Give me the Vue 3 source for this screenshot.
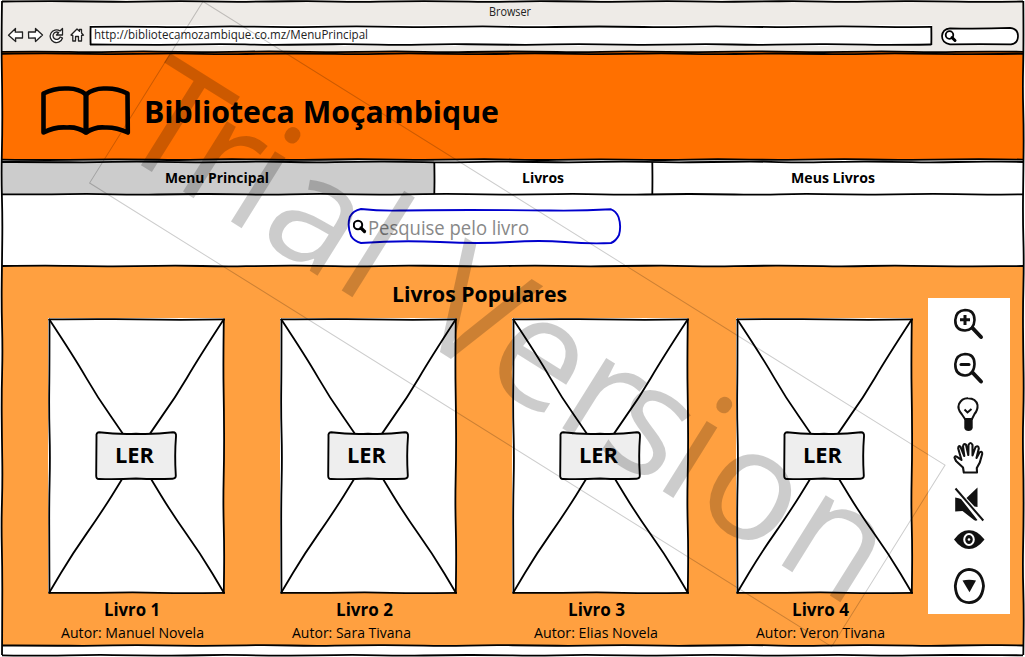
<script setup>
import { h } from 'vue'

// Fixed-width line of text
const Label = (p) =>
  h('svg', { class: 'label', width: p.w, height: Math.round(p.size * 1.4) }, [
    h(
      'text',
      {
        x: 0,
        y: Math.round(p.size * 1.1),
        textLength: p.w,
        lengthAdjust: 'spacingAndGlyphs',
        'font-size': p.size,
        'font-weight': p.weight || 400,
        fill: p.color || '#000',
      },
      p.text
    ),
  ])
Label.props = ['text', 'w', 'size', 'weight', 'color']

// Hand-drawn line: gentle wobble around the straight path
function line(x1, y1, x2, y2, seed = 1, amp = 0.7) {
  const len = Math.hypot(x2 - x1, y2 - y1)
  const n = Math.max(2, Math.round(len / 45))
  const nx = -(y2 - y1) / len
  const ny = (x2 - x1) / len
  const pts = []
  for (let i = 0; i <= n; i++) {
    const t = i / n
    const o = i === 0 || i === n ? 0 : Math.sin(i * 2.3 + seed * 1.7) * amp
    pts.push([x1 + (x2 - x1) * t + nx * o, y1 + (y2 - y1) * t + ny * o])
  }
  let d = `M${pts[0]}`
  for (let i = 1; i < n; i++) {
    const mx = (pts[i][0] + pts[i + 1][0]) / 2
    const my = (pts[i][1] + pts[i + 1][1]) / 2
    d += `Q${pts[i]} ${mx},${my}`
  }
  return d + `L${pts[n]}`
}

const frame = [
  line(2, 1.5, 1023, 1.5, 1),
  line(2, 1, 2, 655, 3),
  line(1023.3, 1, 1023.3, 655, 2),
  line(2, 51.8, 1023, 51.8, 2),
  line(2, 53.8, 1023, 53.8, 5),
  line(2, 159.6, 1023, 159.6, 3),
  line(2, 162, 1023, 162, 6),
  line(2, 194.3, 1023, 194.3, 4),
  line(2, 266, 1023, 266, 5),
  line(2, 645.5, 1023, 645.5, 6),
  line(2, 655.3, 1023, 655.3, 7),
  line(434.3, 162, 434.3, 194, 1, 0.4),
  line(652.3, 162, 652.3, 194, 2, 0.4),
]

const cover = [
  line(0.6, 1.4, 177, 1.4, 1),
  line(175.8, 1, 175.8, 275.5, 3),
  line(0.6, 274.8, 177, 274.8, 4),
  line(1.5, 1, 1.5, 275.5, 6),
  line(1, 1, 176, 275, 2, 1.4),
  line(176, 1, 1, 275, 4, 1.4),
]

const books = [
  { title: 'Livro 1', tw: 56, author: 'Autor: Manuel Novela', aw: 143 },
  { title: 'Livro 2', tw: 57, author: 'Autor: Sara Tivana', aw: 119, start: true },
  { title: 'Livro 3', tw: 57, author: 'Autor: Elias Novela', aw: 124 },
  { title: 'Livro 4', tw: 57, author: 'Autor: Veron Tivana', aw: 129 },
]
</script>

<template>
  <div class="window">
    <header class="chrome">
      <div class="chrome-title"><Label text="Browser" :w="42" :size="12" color="#222" /></div>
      <div class="toolbar">
        <svg class="nav" width="90" height="22" viewBox="0 24 90 22">
          <g fill="#fff" stroke="#222" stroke-width="1.3" stroke-linejoin="round">
            <path d="M8.5 35.200 L15.500 28.500 L15.300 32.200 L22.500 32 L22.500 38 L15.500 38 L15.700 41.500 Z" />
            <path d="M42.500 35 L35.500 28.500 L35.500 32 L28.500 32 L28.700 38.200 L35.300 38 L35.500 41.500 Z" />
            <path d="M60 31 L62.500 28.500 L62.500 35 L56.500 35 L58.700 32.600 A3.700 3.700 0 1 0 60.200 37 L62.500 38 A6.300 6.300 0 1 1 60 31 Z" />
            <path d="M71 35 L77 29 L79.500 31.300 L79.500 29.500 L81.500 29.500 L81.500 33 L83.500 35.200 L81.500 35.500 L81.500 41 L78.500 41 L78.500 36.500 L75.500 36.500 L75.500 41 L72.800 41 L72.800 35.500 Z" />
          </g>
        </svg>
        <div class="url">
          <Label text="http://bibliotecamozambique.co.mz/MenuPrincipal" :w="274" :size="12" color="#222" />
          <svg class="ink" width="843" height="21">
            <path :d="line(0, 1.800, 841.500, 1.800, 2)" />
            <path :d="line(841.300, 1, 841.300, 20, 1, 0.2)" />
            <path :d="line(841.500, 19.500, 0, 19.500, 5)" />
            <path :d="line(0.600, 20, 0.600, 1, 1, 0.2)" />
          </svg>
        </div>
        <svg class="quick" width="78" height="20" viewBox="941 26 78 20">
          <path d="M950 28.300 Q980 29 1010 27.800 Q1018 28.500 1018 36 Q1018 43.500 1011 44.300 Q980 43.800 950 44.300 Q942 43 942 36 Q942.500 29 950 28.300Z" fill="#fff" stroke="#000" stroke-width="1.700" />
          <circle cx="949.500" cy="35" r="3.800" fill="none" stroke="#000" stroke-width="1.800" />
          <path d="M952 37.500 L955 40.500" stroke="#000" stroke-width="3" stroke-linecap="round" />
        </svg>
      </div>
    </header>

    <section class="banner">
      <svg width="92" height="52" viewBox="40 85 92 52">
        <g fill="none" stroke="#000" stroke-width="4.600" stroke-linejoin="round" stroke-linecap="round">
          <path d="M86 94.500 Q78 88 67 88.500 Q54 88 43.500 93.500 L43.500 132.500 Q55 126.500 67 127.500 Q77 126.500 86 132.500 Q95 126.500 105 127.500 Q116 127 127.800 132.500 L127.500 93.500 Q117 88 105 88.500 Q94 88 86 94.500 Z" />
          <path d="M86 94.500 V132" stroke-width="5.200" />
        </g>
      </svg>
      <Label text="Biblioteca Moçambique" :w="355" :size="31" weight="700" />
    </section>

    <nav class="tabs">
      <div class="tab active"><Label text="Menu Principal" :w="104" :size="15" weight="700" /></div>
      <div class="tab"><Label text="Livros" :w="42" :size="15" weight="700" /></div>
      <div class="tab"><Label text="Meus Livros" :w="84" :size="15" weight="700" /></div>
    </nav>

    <section class="search">
      <div class="search-box">
        <svg width="15" height="15" viewBox="353 219 15 15">
          <circle cx="358" cy="225" r="4.200" fill="none" stroke="#000" stroke-width="2" />
          <path d="M361 228 L364.500 231.500" stroke="#000" stroke-width="3.200" stroke-linecap="round" />
        </svg>
        <Label text="Pesquise pelo livro" :w="161" :size="20" color="#888" />
        <svg class="outline" width="274" height="36" viewBox="347 208 274 36">
          <path d="M361 209 Q380 211 400 210.500 T470 210 T550 210.500 T611 209.300 Q616 211 618.500 217 Q621.500 226 619 235 Q616 241 611 243 Q590 244 565 242 T510 242 T440 242 T361 243 Q354 241 351 236 Q347 226 349.800 217 Q353 210.500 361 209 Z" />
        </svg>
      </div>
    </section>

    <main class="content">
      <div class="shelf">
        <h2><Label text="Livros Populares" :w="175" :size="22" weight="700" /></h2>
        <div class="books">
          <article v-for="b in books" :key="b.title" class="book">
            <div class="cover">
              <svg class="cross" width="177" height="276">
                <path v-for="(d, k) in cover" :key="k" :d="d" />
              </svg>
              <div class="read">
                <svg class="read-shape" width="82" height="50">
                  <path d="M4 1.300 Q22 3.500 41 2.800 Q60 3.500 78 1.300 Q81.500 1.300 81 5.500 Q79.500 24 80.800 44.500 Q81 47.500 77.500 47.700 Q60 48.500 41 47.500 Q22 48.500 4 48 Q1 48 1.200 44.500 L1.500 5.500 Q1 1.500 4 1.300 Z" />
                </svg>
                <Label text="LER" :w="39" :size="22" weight="700" />
              </div>
            </div>
            <div class="meta">
              <Label :text="b.title" :w="b.tw" :size="17" weight="700" />
              <Label :class="['author', { start: b.start }]" :text="b.author" :w="b.aw" :size="14.500" />
            </div>
          </article>
        </div>
      </div>

      <aside class="tools">
        <svg width="82" height="47" viewBox="928 298 82 47">
          <path d="M965 310 Q974.500 310 974.500 320 Q974 330 965 330.500 Q955 330 955.300 320 Q956 310.500 965 310 Z" fill="none" stroke="#111" stroke-width="2.600" />
          <path d="M960 319.800 H970 M965 315 V325" stroke="#111" stroke-width="3" />
          <path d="M972.500 328 L981 337" stroke="#111" stroke-width="4" stroke-linecap="round" />
        </svg>
        <svg width="82" height="45" viewBox="928 345 82 45">
          <path d="M965 354 Q974.500 354 974.500 364 Q974 375 965 375.500 Q955 375 955.300 364 Q956 354.500 965 354 Z" fill="none" stroke="#111" stroke-width="2.600" />
          <path d="M961 364.500 H969" stroke="#111" stroke-width="3" stroke-linecap="round" />
          <path d="M972.500 372.500 L981 381.500" stroke="#111" stroke-width="4" stroke-linecap="round" />
        </svg>
        <svg width="82" height="46" viewBox="928 390 82 46">
          <path d="M965 419 L962 414.500 Q957 409 959 404 Q962 398 968 398.300 Q976 398.500 977.500 405 Q978 410 974.500 414 L972 419 Z" fill="none" stroke="#111" stroke-width="2" />
          <path d="M964.500 409.500 L967.500 412.500 L971.500 409" fill="none" stroke="#111" stroke-width="2" />
          <path d="M964.300 419 H972.700 V428 Q972 431 968.500 431 Q965 431 964.300 428 Z" fill="#111" />
        </svg>
        <svg width="82" height="44" viewBox="928 436 82 44">
          <path d="M963.800 472.500 L963 467.500 L956 461 L954.500 457.500 Q955 455.500 957 456.800 L961.500 460 L958.200 448.500 Q958.300 445 960.500 446.800 L964.300 456 L963 446.500 Q963.800 442.500 966 444.800 L968.300 455 L968.500 445 Q970.500 441 972.500 445 L972.500 455.500 L975.500 447 Q978.500 445 978.800 448.500 L976.500 458 L979.500 452.500 Q982.500 450.500 982.200 454 L979.800 462.500 L976.800 468 L977 472.500 Z" fill="none" stroke="#111" stroke-width="2.100" stroke-linejoin="round" />
        </svg>
        <svg width="82" height="45" viewBox="928 480 82 45">
          <path d="M966.500 498 L977.500 487.500 V507 L974.500 506.500 Z M955.200 497.500 Q959 498 961 499 L977.500 520 Q976 521.500 974 520 L962.500 511 L955.200 511.500 Z" fill="#111" />
          <path d="M955.500 488.500 L983.300 520.500" stroke="#111" stroke-width="2" />
        </svg>
        <svg width="82" height="30" viewBox="928 525 82 30">
          <path d="M954 539.500 Q961 530 969 530.300 Q977 530 984.500 539.500 Q977 549 969 549 Q961 549 954 539.500 Z" fill="#111" />
          <ellipse cx="969" cy="539.500" rx="4.800" ry="5.600" fill="#111" stroke="#fff" stroke-width="2" />
          <circle cx="969" cy="539.500" r="1.300" fill="#fff" />
        </svg>
        <svg width="82" height="59" viewBox="928 555 82 59">
          <path d="M969 569.300 Q982 570 983.500 586 Q982 602 969 602.700 Q956 602 955.300 586 Q957 570 969 569.300 Z" fill="none" stroke="#111" stroke-width="2.800" />
          <path d="M962.500 580.500 Q969 579.200 976 580.500 L969.500 592.300 Z" fill="#111" />
        </svg>
      </aside>
    </main>

    <footer class="foot"></footer>

    <svg class="frame" width="1025" height="657">
      <path v-for="(d, k) in frame" :key="k" :d="d" />
    </svg>

    <svg class="watermark" width="1025" height="657">
      <g transform="translate(203 1.500) rotate(32)">
        <rect x="0" y="0" width="875" height="214" />
        <text x="-2 70.500 127 169 257.500 300 347 432 517.500 568 636 680 776.500" y="171.700">Trial Version</text>
      </g>
    </svg>
  </div>
</template>

<style>
body {
  margin: 0;
  background: #fff;
  overflow: hidden;
}
</style>

<style scoped>
.window {
  position: relative;
  width: 1025px;
  height: 657px;
  overflow: hidden;
  display: grid;
  grid-template-rows: 52px 108px 35px 71px 380px 11px;
  padding: 0 2px;
  box-sizing: border-box;
  background: #fff;
  font-family: "Open Sans", "Noto Sans", sans-serif;
}
svg {
  display: block;
  flex: none;
}
.label {
  overflow: visible;
}
.chrome {
  background: #eeebe7;
}
.chrome-title {
  height: 21px;
  padding: 3px 0 0 487px;
  box-sizing: border-box;
}
.toolbar {
  display: flex;
  align-items: flex-start;
  margin-left: -2px;
  padding-top: 3px;
}
.url {
  position: relative;
  width: 842px;
  height: 21px;
  margin-top: 1px;
  padding: 1px 0 0 4px;
  box-sizing: border-box;
  background: #fff;
}
.ink,
.cross,
.read-shape,
.outline {
  position: absolute;
  left: 0;
  top: 0;
  overflow: visible;
}
.ink path,
.frame path,
.cross path {
  fill: none;
  stroke: #000;
  stroke-width: 1.8;
}
.quick {
  margin: 2px 0 0 9px;
}
.banner {
  display: flex;
  align-items: flex-start;
  gap: 12px;
  padding: 33px 0 0 38px;
  background: #ff7000;
}
.banner .label {
  margin-top: 4px;
}
.tabs {
  display: grid;
  grid-template-columns: 432px 218px 1fr;
}
.tab {
  display: flex;
  justify-content: center;
  padding-top: 6px;
}
.tab:nth-child(1) {
  padding-right: 2px;
}
.tab:nth-child(2) {
  padding-right: 1px;
}
.tab:nth-child(3) {
  padding-right: 10px;
}
.active {
  background: #ccc;
}
.search {
  padding: 13px 0 0 345px;
}
.search-box {
  position: relative;
  display: flex;
  width: 274px;
  height: 36px;
  padding: 11px 0 0 6px;
  box-sizing: border-box;
}
.search-box .label {
  margin-top: -6px;
}
.outline path {
  fill: none;
  stroke: #0000cd;
  stroke-width: 1.9;
}
.content {
  display: flex;
  justify-content: space-between;
  padding-right: 13px;
  background: #ffa040;
}
h2 {
  margin: 0;
  padding: 12px 0 0 390px;
  height: 52px;
  box-sizing: border-box;
}
.books {
  display: flex;
  gap: 56px;
  padding-left: 46px;
}
.book {
  width: 176px;
}
.book:last-child {
  margin-left: -8px;
}
.cover {
  position: relative;
  width: 176px;
  height: 275px;
  padding: 113px 0 0 47px;
  box-sizing: border-box;
  background: #fff;
}
.read {
  position: relative;
  width: 82px;
  height: 50px;
  padding: 8px 0 0 20px;
  box-sizing: border-box;
}
.read .label {
  position: relative;
}
.read-shape path {
  fill: #eee;
  stroke: #000;
  stroke-width: 1.9;
}
.meta {
  display: flex;
  flex-direction: column;
  align-items: center;
  padding: 4px 8px 0 0;
}
.author {
  margin-top: 1px;
}
.author.start {
  align-self: flex-start;
  margin-left: 12px;
}
.tools {
  width: 82px;
  height: 316px;
  margin-top: 32px;
  background: #fff;
}
.frame,
.watermark {
  position: absolute;
  left: 0;
  top: 0;
  pointer-events: none;
}
.watermark rect {
  fill: none;
  stroke: #000;
  stroke-opacity: 0.2;
  stroke-width: 1;
}
.watermark text {
  font-size: 155px;
  fill: #000;
  fill-opacity: 0.2;
}
</style>
